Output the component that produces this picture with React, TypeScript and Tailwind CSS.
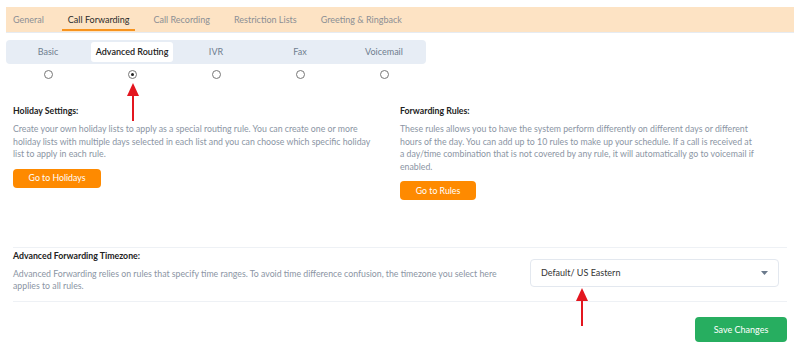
import React from "react";

const TABS = ["General", "Call Forwarding", "Call Recording", "Restriction Lists", "Greeting & Ringback"];
const SUBTABS = ["Basic", "Advanced Routing", "IVR", "Fax", "Voicemail"];

function UpArrow({ className }: { className: string }) {
  return (
    <svg className={className} width="14" height="38" viewBox="0 0 14 38">
      <polygon points="7,0 13,13 1,13" fill="#e3161f" />
      <rect x="6" y="12" width="2" height="26" fill="#e3161f" />
    </svg>
  );
}

export default function App() {
  return (
    <div className="relative w-[800px] h-[351px] bg-white overflow-hidden font-['Lato','Liberation_Sans',sans-serif] text-[8.75px]">
      {/* top tabs */}
      <div className="mx-[6px] mt-[7px] h-[26px] bg-[#fde3c4] border-b border-[#e6ebf1] flex items-stretch pl-[1px] gap-[12px] text-[9px]">
        {TABS.map((t, i) => (
          <div
            key={t}
            className={
              i === 1
                ? "relative flex items-center px-[6px] text-[#2b2b2b]"
                : "relative flex items-center px-[6px] text-[#8c8f94]"
            }
          >
            {t}
            {i === 1 && <span className="absolute left-0 right-0 bottom-[1px] h-[2px] bg-[#f7931e]" />}
          </div>
        ))}
      </div>

      {/* sub tabs */}
      <div className="ml-[6px] mt-[7px] w-[420px] h-[24px] rounded-[4px] bg-[#e7edf5] flex items-center text-[9px]">
        {SUBTABS.map((t, i) => (
          <div key={t} className="w-[84px] flex justify-center">
            {i === 1 ? (
              <span className="h-[20px] w-[82px] rounded-[3px] bg-white flex items-center justify-center text-[#222] font-semibold">
                {t}
              </span>
            ) : (
              <span className="text-[#6f7d8f]">{t}</span>
            )}
          </div>
        ))}
      </div>

      {/* radios */}
      <div className="ml-[6px] mt-[5px] w-[420px] h-[10px] flex items-center">
        {SUBTABS.map((t, i) => (
          <div key={t} className="w-[84px] flex justify-center">
            <span className="w-[9px] h-[9px] rounded-full border border-[#777] bg-white flex items-center justify-center">
              {i === 1 && <span className="w-[3px] h-[3px] rounded-full bg-[#222]" />}
            </span>
          </div>
        ))}
      </div>

      {/* holiday / rules */}
      <div className="mt-[26px] flex px-[13px]">
        <div className="w-[387px]">
          <div className="w-[364px]">
            <div className="font-bold text-[#222] leading-[12px]">Holiday Settings:</div>
            <p className="mt-[6px] text-[#8b95a4] leading-[12.5px]">
              Create your own holiday lists to apply as a special routing rule. You can create one or more holiday lists with multiple days selected in each list and you can choose which specific holiday list to apply in each rule.
            </p>
            <button className="mt-[8px] h-[19px] w-[88px] rounded-[4px] bg-[#fe8a00] text-white">Go to Holidays</button>
          </div>
        </div>
        <div className="w-[356px]">
          <div className="font-bold text-[#222] leading-[12px]">Forwarding Rules:</div>
          <p className="mt-[6px] text-[#8b95a4] leading-[12.5px]">
            These rules allows you to have the system perform differently on different days or different hours of the day. You can add up to 10 rules to make up your schedule. If a call is received at a day/time combination that is not covered by any rule, it will automatically go to voicemail if enabled.
          </p>
          <button className="mt-[8px] h-[19px] w-[76px] rounded-[4px] bg-[#fe8a00] text-white">Go to Rules</button>
        </div>
      </div>

      {/* timezone */}
      <div className="absolute left-[13px] top-[247px] w-[774px] border-t border-b border-[#eef1f5] h-[55px] flex items-start">
        <div className="flex-1 pt-[2px]">
          <div className="font-bold text-[#222] leading-[12px]">Advanced Forwarding Timezone:</div>
          <p className="mt-[6px] w-[492px] text-[#8b95a4] leading-[12px]">
            Advanced Forwarding relies on rules that specify time ranges. To avoid time difference confusion, the timezone you select here applies to all rules.
          </p>
        </div>
        <div className="mt-[11px] mr-[8px] w-[249px] h-[28px] rounded-[4px] border border-[#e3e8ef] flex items-center justify-between pl-[10px] pr-[10px] text-[9px]">
          <span className="text-[#333]">Default/ US Eastern</span>
          <svg width="7" height="4" viewBox="0 0 7 4">
            <polygon points="0,0 7,0 3.5,4" fill="#6b7a8c" />
          </svg>
        </div>
      </div>

      <div className="absolute left-[695px] top-[317px]">
        <button className="h-[25px] w-[92px] rounded-[4px] bg-[#27ae60] text-white text-[9px]">Save Changes</button>
      </div>

      {/* annotation arrows */}
      <UpArrow className="absolute left-[126px] top-[83px]" />
      <UpArrow className="absolute left-[575px] top-[288px]" />
    </div>
  );
}
